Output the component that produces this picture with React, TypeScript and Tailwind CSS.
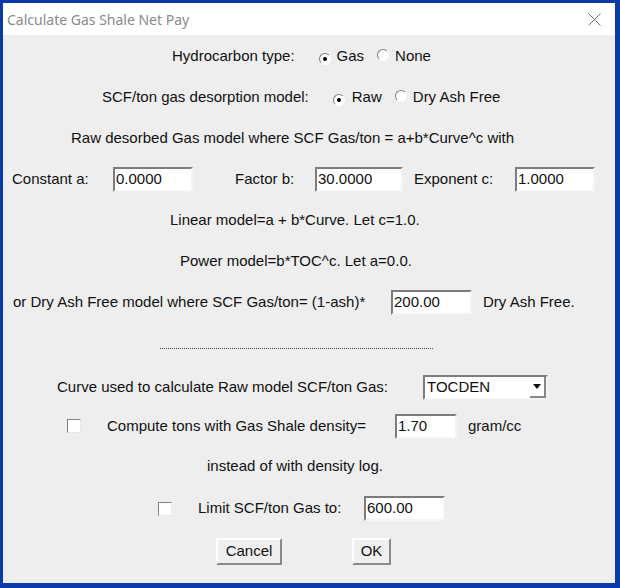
import React from 'react';

function Radio({ checked }: { checked?: boolean }) {
  return (
    <span className="relative inline-flex h-[12px] w-[12px] shrink-0 items-center justify-center rounded-full border border-t-[#808080] border-l-[#808080] border-r-white border-b-white bg-white">
      {checked && <span className="h-[4px] w-[4px] rounded-full bg-black" />}
    </span>
  );
}

function Check() {
  return <span className="inline-block h-[14px] w-[14px] shrink-0 border border-t-[#808080] border-l-[#808080] border-r-[#e8e8e8] border-b-[#e8e8e8] bg-white" />;
}

function Field({ value, w }: { value: string; w: string }) {
  return (
    <div className={`${w} flex h-[25px] shrink-0 items-center border-2 border-t-[#7c7c7c] border-l-[#7c7c7c] border-r-[#f4f4f4] border-b-[#f4f4f4] bg-white pl-[1px]`}>
      {value}
    </div>
  );
}

function Button({ label, w }: { label: string; w: string }) {
  return (
    <button className={`${w} h-[27px] border-2 border-t-white border-l-white border-r-[#8a8a8a] border-b-[#8a8a8a] bg-[#efefef] text-[15px] text-[#111]`}>
      {label}
    </button>
  );
}

export default function App() {
  return (
    <div className="h-[588px] w-[620px] bg-[#0b3aa8] pt-[3px] pl-[3px]">
      <div className="flex h-[580px] w-[612px] flex-col bg-[#eeeeee] font-['Liberation_Sans',Arial,sans-serif] text-[15px] text-[#111]">
        {/* Title bar */}
        <div className="flex h-[32px] items-center justify-between bg-white pl-[4px] pr-[14px]">
          <span className="font-['Noto_Sans',sans-serif] text-[14px] text-[#8a8a8a]">Calculate Gas Shale Net Pay</span>
          <svg width="13" height="13" viewBox="0 0 13 13" className="mt-[1px]">
            <path d="M0.5 0.5 L12.5 12.5 M12.5 0.5 L0.5 12.5" stroke="#6f6f6f" strokeWidth="1" />
          </svg>
        </div>

        {/* Hydrocarbon type */}
        <div className="flex h-[42px] items-center pl-[169px]">
          <span>Hydrocarbon type:</span>
          <span className="ml-[24px]"><Radio checked /></span>
          <span className="ml-[6px]">Gas</span>
          <span className="ml-[13px]"><Radio /></span>
          <span className="ml-[6px]">None</span>
        </div>

        <div className="flex h-[41px] items-center pl-[99px]">
          <span>SCF/ton gas desorption model:</span>
          <span className="ml-[24px]"><Radio checked /></span>
          <span className="ml-[7px]">Raw</span>
          <span className="ml-[13px]"><Radio /></span>
          <span className="ml-[6px]">Dry Ash Free</span>
        </div>

        <div className="flex h-[41px] items-center pl-[68px]">
          Raw desorbed Gas model where SCF Gas/ton = a+b*Curve^c with
        </div>

        <div className="flex h-[41px] items-center pl-[9px]">
          <span className="w-[101px]">Constant a:</span>
          <Field value="0.0000" w="w-[80px]" />
          <span className="ml-[42px] w-[80px]">Factor b:</span>
          <Field value="30.0000" w="w-[88px]" />
          <span className="ml-[11px] w-[101px]">Exponent c:</span>
          <Field value="1.0000" w="w-[80px]" />
        </div>

        <div className="flex h-[41px] items-center pl-[167px]">Linear model=a + b*Curve. Let c=1.0.</div>

        <div className="flex h-[41px] items-center pl-[177px]">Power model=b*TOC^c. Let a=0.0.</div>

        <div className="flex h-[41px] items-center pl-[10px]">
          <span className="w-[378px]">or Dry Ash Free model where SCF Gas/ton= (1-ash)*</span>
          <Field value="200.00" w="w-[81px]" />
          <span className="ml-[11px]">Dry Ash Free.</span>
        </div>

        <div className="flex h-[45px] items-center pt-[6px] pl-[157px]">
          <div className="w-[273px] border-t border-dotted border-[#444]" />
        </div>

        <div className="flex h-[38px] items-center pl-[54px]">
          <span className="w-[366px]">Curve used to calculate Raw model SCF/ton Gas:</span>
          <div className="flex h-[25px] w-[125px] items-center border-2 border-t-[#7c7c7c] border-l-[#7c7c7c] border-r-[#f4f4f4] border-b-[#f4f4f4] bg-white">
            <span className="flex-1 pl-[2px]">TOCDEN</span>
            <span className="flex h-full w-[16px] items-center justify-center border-r-2 border-b-2 border-[#888] bg-white">
              <svg width="8" height="5" viewBox="0 0 8 5"><path d="M0 0 H8 L4 5 Z" fill="#111" /></svg>
            </span>
          </div>
        </div>

        <div className="flex h-[40px] items-center pl-[64px]">
          <Check />
          <span className="ml-[26px] w-[288px]">Compute tons with Gas Shale density=</span>
          <Field value="1.70" w="w-[62px]" />
          <span className="ml-[11px]">gram/cc</span>
        </div>

        <div className="flex h-[41px] items-center pl-[204px]">instead of with density log.</div>

        <div className="flex h-[43px] items-center pl-[155px]">
          <Check />
          <span className="ml-[26px] w-[166px]">Limit SCF/ton Gas to:</span>
          <Field value="600.00" w="w-[81px]" />
        </div>

        <div className="flex h-[42px] items-center pl-[213px]">
          <Button label="Cancel" w="w-[66px]" />
          <span className="ml-[70px]"><Button label="OK" w="w-[39px]" /></span>
        </div>
      </div>
    </div>
  );
}
